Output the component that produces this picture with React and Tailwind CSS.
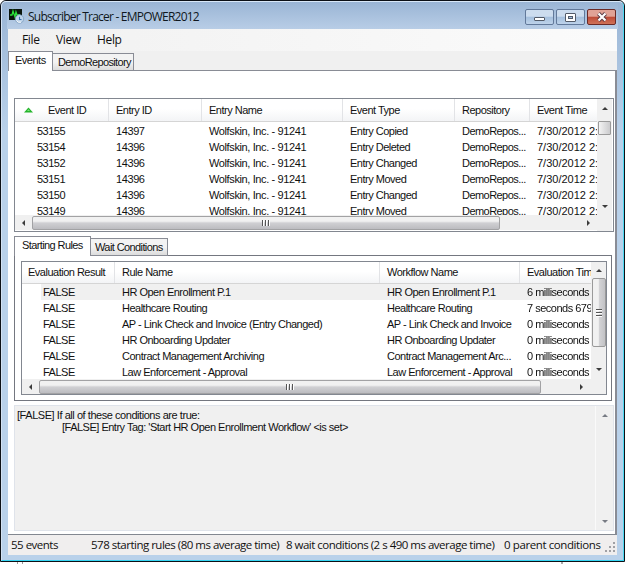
const SANS = "font-['Liberation_Sans',Arial,sans-serif] text-[11px] tracking-[-0.5px]"
const SEGOE = "font-['Open_Sans','Noto_Sans',sans-serif]"

const EVENTS = [
  ['53155', '14397', 'Wolfskin, Inc. - 91241', 'Entry Copied'],
  ['53154', '14396', 'Wolfskin, Inc. - 91241', 'Entry Deleted'],
  ['53152', '14396', 'Wolfskin, Inc. - 91241', 'Entry Changed'],
  ['53151', '14396', 'Wolfskin, Inc. - 91241', 'Entry Moved'],
  ['53150', '14396', 'Wolfskin, Inc. - 91241', 'Entry Changed'],
  ['53149', '14396', 'Wolfskin, Inc. - 91241', 'Entry Moved'],
]

const RULES = [
  ['HR Open Enrollment P.1', 'HR Open Enrollment P.1', '6 milliseconds'],
  ['Healthcare Routing', 'Healthcare Routing', '7 seconds 679'],
  ['AP - Link Check and Invoice (Entry Changed)', 'AP - Link Check and Invoice', '0 milliseconds'],
  ['HR Onboarding Updater', 'HR Onboarding Updater', '0 milliseconds'],
  ['Contract Management Archiving', 'Contract Management Arc...', '0 milliseconds'],
  ['Law Enforcement - Approval', 'Law Enforcement - Approval', '0 milliseconds'],
]

const EVENT_COLS = ['w-[94px]', 'w-[93px]', 'w-[141px]', 'w-[112px]', 'w-[75px]', 'w-[67px]']
const EVENT_CELLS = [
  'w-[94px]',
  'w-[93px] tracking-[-0.4px]',
  'w-[141px] tracking-[-0.38px]',
  'w-[112px]',
  'w-[75px] tracking-[-0.55px]',
  'w-[67px] tracking-[0px]',
]
const RULE_COLS = ['w-[93px]', 'w-[265px]', 'w-[140px]', 'w-[71px]']
const RULE_CELLS = ['w-[93px]', 'w-[265px]', 'w-[140px]', 'w-[71px] will-change-transform']

const ARROWS = {
  up: 'M0 4 L3 1 L6 4 Z',
  down: 'M0 1 L6 1 L3 4 Z',
  left: 'M4 0 L1 3 L4 6 Z',
  right: 'M1 0 L4 3 L1 6 Z',
}

function Arrow({ dir, className = 'fill-[#3c3c3c]' }) {
  const flat = dir === 'up' || dir === 'down'
  return (
    <svg width={flat ? 6 : 5} height={flat ? 5 : 6} className={`shrink-0 ${className}`}>
      <path d={ARROWS[dir]} />
    </svg>
  )
}

function HScroll({ thumb, tail }) {
  return (
    <div className="flex h-[15px] shrink-0 items-center bg-[#f0f0f0]">
      <div className="flex w-[17px] shrink-0 justify-center"><Arrow dir="left" /></div>
      <div className={`flex h-[14px] shrink-0 justify-center gap-px rounded-[2px] border border-[#a2a2a4] bg-linear-to-b from-[#f1f1f1] from-35% via-[#d0d0d3] via-50% to-[#bcbcc0] pt-[3px] ${thumb}`}>
        <i className="h-[6px] w-[2px] border-r border-white bg-[#555]" />
        <i className="h-[6px] w-[2px] border-r border-white bg-[#555]" />
        <i className="h-[6px] w-[2px] border-r border-white bg-[#555]" />
      </div>
      <div className={`flex flex-1 justify-end ${tail}`}><Arrow dir="right" /></div>
    </div>
  )
}

function Header({ cols, labels, first, height }) {
  return (
    <div className={`flex shrink-0 border-b border-[#d5d5d5] bg-linear-to-b from-white from-45% to-[#f3f4f6] ${height}`}>
      {labels.map((label, i) => (
        <div
          key={label}
          className={`flex shrink-0 items-center overflow-hidden border-r border-[#e2e3e6] last:border-r-0 ${cols[i]} ${i === 0 ? first : 'pl-[7px]'}`}
        >
          {i === 0 && labels.length > 4 && (
            <svg width="9" height="6" className="mr-[15px] shrink-0">
              <path d="M0 5.5 L4.5 0.5 L9 5.5 Z" fill="#25b52c" />
              <path d="M3 4 L4.5 2.3 L6 4 Z" fill="#7ee27a" />
            </svg>
          )}
          {label}
        </div>
      ))}
    </div>
  )
}

function Row({ cols, cells, first }) {
  return cells.map((cell, i) => (
    <div key={i} className={`shrink-0 overflow-hidden ${cols[i]} ${i === 0 ? first : 'pl-[7px]'}`}>{cell}</div>
  ))
}

function TitleBar() {
  return (
    <div className="flex h-[27px] shrink-0 items-start bg-linear-to-b from-[#9ab5d5] to-[#b8cde6] pr-[2px] pl-[2px]">
      <svg width="17" height="17" className="mt-[6px] shrink-0">
        <rect x="0" y="1" width="13" height="11" fill="#0a150c" />
        <path d="M1 7 L3 7 L4 3 L6 9 L7 4 L8 7 L11 7" fill="none" stroke="#2be03a" strokeWidth="1.3" />
        <circle cx="10.5" cy="11" r="4.2" fill="#bdd3ea" stroke="#7f9fc0" strokeWidth="0.8" />
        <path d="M10.5 8.8 V11.5 H12.5" fill="none" stroke="#3b6ea8" strokeWidth="1.1" />
        <path d="M7.5 12.5 Q9 15 12 14.2" fill="none" stroke="#fff" />
      </svg>
      <div className={`mt-[5px] ml-[2px] flex-1 text-[12px] leading-[19px] tracking-[-0.78px] text-[#101820] ${SEGOE}`}>
        Subscriber Tracer - EMPOWER2012
      </div>
      <div className="mt-[7px] flex gap-[2px]">
        <div className="flex h-4 w-[29px] items-center justify-center rounded-[2px] border border-[#62799a] bg-linear-to-b from-[#ccdcee] from-45% via-[#a4bfdd] via-50% to-[#bed3ea]">
          <div className="mt-[4px] h-[4px] w-[11px] rounded-[1px] border border-[#535b68] bg-white" />
        </div>
        <div className="flex h-4 w-[29px] items-center justify-center rounded-[2px] border border-[#62799a] bg-linear-to-b from-[#ccdcee] from-45% via-[#a4bfdd] via-50% to-[#bed3ea]">
          <div className="flex h-[9px] w-[11px] items-center justify-center rounded-[1px] border border-[#535b68] bg-white">
            <div className="h-[3px] w-[5px] border border-[#535b68] bg-[#a4bfdd]" />
          </div>
        </div>
        <div className="flex h-4 w-[29px] items-center justify-center rounded-[2px] border border-[#6b2a26] bg-linear-to-b from-[#e0a296] from-45% via-[#bd4936] via-50% to-[#cf7258]">
          <svg width="12" height="10">
            <path d="M2.5 1.5 L9.5 8.5 M9.5 1.5 L2.5 8.5" stroke="#5a3a44" strokeWidth="4" />
            <path d="M2.5 1.5 L9.5 8.5 M9.5 1.5 L2.5 8.5" stroke="#fff" strokeWidth="2.2" />
          </svg>
        </div>
      </div>
    </div>
  )
}

function Tabs({ active, other, activeCls, otherCls }) {
  return (
    <div className="relative z-10 -mb-px flex h-[20px] shrink-0 items-end">
      <div className={`h-[20px] border border-b-0 border-[#898c95] bg-white leading-[17px] ${activeCls}`}>{active}</div>
      <div className={`h-[18px] border border-l-0 border-[#898c95] bg-linear-to-b from-[#f3f3f3] from-50% to-[#dcdcdc] leading-[17px] ${otherCls}`}>{other}</div>
    </div>
  )
}

function EventList() {
  return (
    <div className="flex h-[134px] w-[600px] shrink-0 border border-[#828790] bg-white">
      <div className="flex w-[582px] flex-col overflow-hidden">
        <Header
          cols={EVENT_COLS}
          height="h-[23px]"
          first="pl-[9px]"
          labels={['Event ID', 'Entry ID', 'Entry Name', 'Event Type', 'Repository', 'Event Time']}
        />
        <div className="h-[93px] shrink-0 overflow-hidden pt-px">
          {EVENTS.map(event => (
            <div key={event[0]} className="flex h-4 leading-[17px]">
              <Row cols={EVENT_CELLS} first="pl-[22px]" cells={[...event, 'DemoRepos...', '7/30/2012 2:']} />
            </div>
          ))}
        </div>
        <HScroll thumb="w-[468px]" tail="pr-[6px]" />
      </div>
      <div className="flex w-[15px] flex-col items-center bg-[#f0f0f0] pt-[7px]">
        <Arrow dir="up" />
        <div className="mt-[10px] h-[14px] w-[13px] shrink-0 rounded-[1px] border border-[#9a9a9a] bg-linear-to-r from-[#f3f3f3] to-[#cbcbcd]" />
        <div className="mt-[69px]"><Arrow dir="down" /></div>
      </div>
    </div>
  )
}

function RuleList() {
  return (
    <div className="flex h-[134px] w-[586px] shrink-0 border border-[#828790] bg-white">
      <div className="flex w-[569px] flex-col overflow-hidden">
        <Header
          cols={RULE_COLS}
          height="h-[22px]"
          first="pl-[6px]"
          labels={['Evaluation Result', 'Rule Name', 'Workflow Name', 'Evaluation Time']}
        />
        <div className="h-[95px] shrink-0 overflow-hidden">
          {RULES.map((rule, i) => (
            <div
              key={rule[0]}
              className={i === 0
                ? 'flex h-4 bg-linear-to-r from-white from-[19px] to-[#f0f0f0] to-[19px] leading-[17px]'
                : 'flex h-4 leading-[17px]'}
            >
              <Row cols={RULE_CELLS} first="pl-[21px]" cells={['FALSE', ...rule]} />
            </div>
          ))}
        </div>
        <HScroll thumb="w-[502px]" tail="pr-[7px]" />
      </div>
      <div className="flex w-[15px] flex-col items-center bg-[#f0f0f0] pt-[6px]">
        <Arrow dir="up" />
        <div className="mt-[5px] flex h-[69px] w-[14px] shrink-0 flex-col items-center justify-center gap-px rounded-[2px] border border-[#9a9a9a] bg-linear-to-r from-[#f1f1f1] from-45% via-[#d4d4d6] via-50% to-[#c2c2c5]">
          <i className="h-[2px] w-[6px] border-b border-white bg-[#555]" />
          <i className="h-[2px] w-[6px] border-b border-white bg-[#555]" />
          <i className="h-[2px] w-[6px] border-b border-white bg-[#555]" />
        </div>
        <div className="mt-[20px]"><Arrow dir="down" /></div>
      </div>
    </div>
  )
}

function Conditions() {
  return (
    <div className="mt-[4px] flex h-[126px] w-[600px] shrink-0 justify-between border border-[#dfe3ea] bg-[#f0f0f0] leading-[12px]">
      <div className="pt-[3px] pl-[2px]">
        <p className="tracking-[-0.45px]">[FALSE] If all of these conditions are true:</p>
        <p className="pl-[45px]">[FALSE] Entry Tag: 'Start HR Open Enrollment Workflow' &lt;is set&gt;</p>
      </div>
      <div className="flex w-[18px] flex-col items-center justify-between border-l border-[#fafafa] bg-[#f0f0f0] pt-[7px] pb-[6px]">
        <Arrow dir="up" className="fill-[#777b83]" />
        <Arrow dir="down" className="fill-[#777b83]" />
      </div>
    </div>
  )
}

function StatusBar() {
  return (
    <div className={`flex h-[20px] shrink-0 items-center bg-[#f0eeee] pl-[3px] text-[11.5px] leading-[20px] tracking-[-0.5px] ${SEGOE}`}>
      <span className="w-[80px]">55 events</span>
      <span className="w-[195px]">578 starting rules (80 ms average time)</span>
      <span className="w-[218px]">8 wait conditions (2 s 490 ms average time)</span>
      <span className="w-[101px] tracking-[-0.4px]">0 parent conditions</span>
      <svg width="11" height="11" className="mt-[4px] fill-[#a0a0a4]">
        <path d="M8 0h2v2h-2z M4 4h2v2h-2z M8 4h2v2h-2z M0 8h2v2h-2z M4 8h2v2h-2z M8 8h2v2h-2z" />
      </svg>
    </div>
  )
}

export default function App() {
  return (
    <div className="h-[564px] w-[626px] overflow-hidden bg-white whitespace-pre text-[#111]">
      <div className="flex h-[562px] w-[625px] flex-col overflow-hidden rounded-t-[6px] border border-[#0c1016] bg-[#b9d1ea]">
        <div className="flex flex-1 flex-col rounded-t-[5px] border border-t-[#d9e8f8] border-r-[#4cd9f2] border-b-[#35d5f3] border-l-[#d3e2f3] bg-linear-to-b from-[#9ab5d5] to-[#b9d1ea] to-[130px] px-[5px]">
          <TitleBar />
          <div className="ml-px flex w-[609px] flex-1 flex-col">
            <div className={`flex h-[22px] shrink-0 items-center bg-linear-to-r from-[#f1f1f1] to-[#fbfbfb] pl-[14px] text-[12px] tracking-[-0.35px] ${SEGOE}`}>
              <span className="w-[34px]">File</span>
              <span className="w-[41px]">View</span>
              <span>Help</span>
            </div>
            <div className={`flex h-[484px] shrink-0 flex-col bg-[#f0f0f0] ${SANS}`}>
              <Tabs
                active="Events"
                other="DemoRepository"
                activeCls="w-[45px] pl-[6px]"
                otherCls="w-[81px] pl-[5px] tracking-[-0.65px]"
              />
              <div className="flex flex-1 flex-col border border-r-2 border-b-[#828790] border-l-0 border-[#898c95] bg-white pt-[27px] pl-[6px]">
                <EventList />
                <div className="mt-[4px] flex flex-col">
                  <Tabs
                    active="Starting Rules"
                    other="Wait Conditions"
                    activeCls="w-[77px] pl-[7px] tracking-[-0.6px]"
                    otherCls="w-[77px] pl-[4px] tracking-[-0.6px]"
                  />
                  <div className="h-[146px] w-[598px] border border-[#747780] pt-[5px] pl-[6px]">
                    <RuleList />
                  </div>
                </div>
                <Conditions />
              </div>
            </div>
            <StatusBar />
          </div>
        </div>
      </div>
      <div className="ml-[17px] flex h-[2px] w-[546px] justify-between">
        <div className="w-[6px] border-x border-[#999]" />
        <div className="w-[2px] bg-[#aaa]" />
      </div>
    </div>
  )
}
